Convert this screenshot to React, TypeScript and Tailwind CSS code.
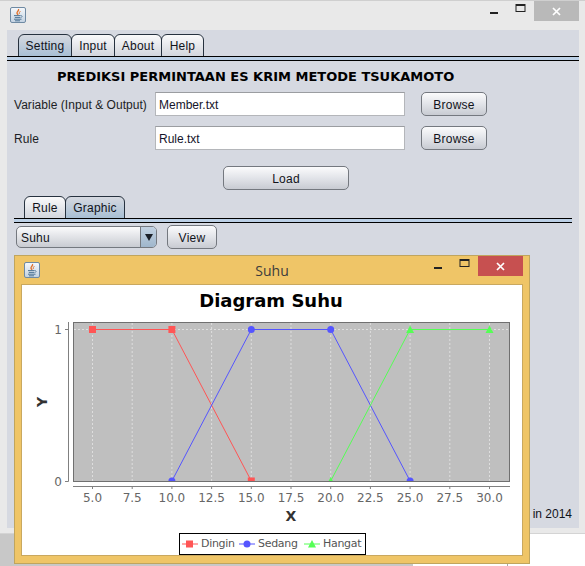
import type { ReactNode } from 'react';

function JavaIcon() {
  return (
    <div className="flex h-4 w-4 items-center justify-center rounded-[2px] border border-[#6f8aa3] bg-gradient-to-b from-[#f4f7fa] to-[#c4d3e2]">
      <svg width="14" height="14" viewBox="0 0 14 14" fill="none">
        <path d="M7.5 1C8.5 2.6 5.5 3.6 6 5.2C6.2 5.9 6.8 6.3 7 7" stroke="#e0702a" strokeWidth="1.3" />
        <path d="M9.4 3C9 4 7.8 4.4 8.3 6" stroke="#e0702a" strokeWidth="0.9" />
        <path d="M3 7.6H9.6M3.8 9.4H9M3 11.2H10.5M4 12.8H9" stroke="#4f7596" strokeWidth="1" />
        <path d="M9.8 7.6C11.6 7.4 11.6 9.4 9.4 9.6" stroke="#4f7596" strokeWidth="0.8" />
      </svg>
    </div>
  );
}

function WindowButtons({ closeClass, iconColor }: { closeClass: string; iconColor: string }) {
  return (
    <div className="flex items-start">
      <svg width="40" height="20" viewBox="0 0 40 20">
        <rect x="1" y="11" width="8" height="2" fill={iconColor} />
        <rect x="27" y="3.5" width="9" height="7" fill="none" stroke={iconColor} strokeWidth="1" />
        <rect x="27" y="3" width="9" height="2" fill={iconColor} />
      </svg>
      <div className={`ml-[5px] flex h-5 w-[45px] items-center justify-center ${closeClass}`}>
        <svg width="9" height="9" viewBox="0 0 9 9">
          <path d="M1 1L8 8M8 1L1 8" stroke="#fff" strokeWidth="1.7" />
        </svg>
      </div>
    </div>
  );
}

function Tab({ label, active, width }: { label: string; active?: boolean; width: string }) {
  return (
    <div
      className={`-mb-px flex h-[23px] items-center justify-center rounded-t-[6px] border border-[#27323f] text-[12px] tracking-[0.2px] text-[#11131a] ${width} ${
        active ? 'bg-gradient-to-b from-[#d6d9e0] to-[#a8bfd4]' : 'bg-gradient-to-b from-[#fafafb] to-[#d3d6dd]'
      }`}
    >
      {label}
    </div>
  );
}

function Separator() {
  return <div className="h-[5px] border-y border-black bg-[#bcd0e6]" />;
}

function Button({ children, className }: { children: ReactNode; className: string }) {
  return (
    <button className={`flex items-center justify-center rounded-[5px] border border-[#74787f] bg-gradient-to-b from-[#fbfbfc] via-[#e2e4e9] to-[#c8cbd2] pt-px text-[12px] tracking-[0.25px] text-[#11131a] ${className}`}>
      {children}
    </button>
  );
}

function TextRow({ label, value }: { label: string; value: string }) {
  return (
    <div className="flex h-6 items-center">
      <span className="w-[141px] pt-px text-[12px] tracking-[0.04px] text-[#1c1e25]">{label}</span>
      <div className="flex h-6 w-[250px] items-center border border-[#b4b6ba] border-t-[#9b9da1] bg-white pl-[3px] pt-px text-[12px] text-[#14142a]">
        {value}
      </div>
      <Button className="ml-4 h-6 w-[66px]">Browse</Button>
    </div>
  );
}

const xs = [0, 1, 2, 3, 4, 5, 6, 7, 8, 9, 10].map((i) => ({
  x: 92.5 + i * 39.7,
  label: (5 + i * 2.5).toFixed(1),
}));

const Y1 = 329.5;
const Y0 = 481;
const px = (v: number) => 92.5 + ((v - 5) / 25) * 397;
const sans = '"DejaVu Sans", sans-serif';

function Chart() {
  const red = [[5, Y1], [10, Y1], [15, Y0]];
  const blue = [[10, Y0], [15, Y1], [20, Y1], [25, Y0]];
  const green = [[20, Y0], [25, Y1], [30, Y1]];
  const pts = (list: number[][]) => list.map(([v, y]) => `${px(v)},${y}`).join(' ');

  return (
    <svg width="500" height="212" viewBox="22 316 500 212" className="block">
      <defs>
        <clipPath id="plot">
          <rect x="73" y="322" width="437" height="159" />
        </clipPath>
      </defs>
      <rect x="73.5" y="322.5" width="436" height="159" fill="#bfbfbf" stroke="#707070" />
      {xs.map((t) => (
        <line key={t.label} x1={t.x} x2={t.x} y1="323" y2="481" stroke="#dedede" strokeWidth="1" strokeDasharray="2 2" />
      ))}
      <line x1="74" x2="509" y1={Y1} y2={Y1} stroke="#dedede" strokeDasharray="2 2" />
      <g clipPath="url(#plot)">
        <polyline points={pts(red)} fill="none" stroke="#ff5555" />
        {red.map(([v, y]) => (
          <rect key={v} x={px(v) - 3.5} y={y - 3.5} width="7" height="7" fill="#ff5555" />
        ))}
        <polyline points={pts(blue)} fill="none" stroke="#5555ff" />
        {blue.map(([v, y]) => (
          <circle key={v} cx={px(v)} cy={y} r="3.5" fill="#5555ff" />
        ))}
        <polyline points={pts(green)} fill="none" stroke="#55ff55" />
        {green.map(([v, y]) => (
          <path key={v} d={`M${px(v)} ${y - 4}L${px(v) + 4} ${y + 3.5}H${px(v) - 4}Z`} fill="#55ff55" />
        ))}
      </g>
      <path d="M68.5 322V481.5M65 329.5H68.5M65 481.5H68.5M73 486.5H510" stroke="#808080" fill="none" />
      {xs.map((t) => (
        <line key={t.label} x1={t.x} x2={t.x} y1="486" y2="489" stroke="#808080" />
      ))}
      <g fontFamily={sans} fontSize="12" fill="#666">
        <text x="62" y="334" textAnchor="end">1</text>
        <text x="62" y="486" textAnchor="end">0</text>
        {xs.map((t) => (
          <text key={t.label} x={t.x} y="502" textAnchor="middle">{t.label}</text>
        ))}
      </g>
      <text x="291" y="521" textAnchor="middle" fontFamily={sans} fontSize="14" fontWeight="bold" fill="#333">X</text>
      <text x="0" y="0" transform="translate(47 402) rotate(-90)" textAnchor="middle" fontFamily={sans} fontSize="14" fontWeight="bold" fill="#333">Y</text>
    </svg>
  );
}

function LegendItem({ label, width, children }: { label: string; width: string; children: ReactNode }) {
  return (
    <div className={`flex items-center gap-[3px] ${width}`}>
      <svg width="16" height="10" viewBox="0 0 16 10" className="shrink-0">{children}</svg>
      <span>{label}</span>
    </div>
  );
}

function SuhuWindow() {
  return (
    <div className="absolute left-[14px] top-[255px] flex h-[309px] w-[516px] flex-col border border-[#c0a55e] bg-[#efc567] px-[6px] pb-[7px]">
      <div className="relative flex h-[28px] shrink-0 items-start justify-between pl-[3px] pt-[6px]">
        <JavaIcon />
        <span className="absolute left-0 right-0 top-[7px] text-center text-[14px] leading-[16px] text-[#3c3c3c] [font-family:'Open_Sans',sans-serif]">
          Suhu
        </span>
        <div className="-mt-[6px] mr-0 flex">
          <WindowButtons closeClass="bg-[#c75050]" iconColor="#222" />
        </div>
      </div>
      <div className="flex-1 border border-[#c9a85f] bg-white">
        <div className="flex h-[31px] items-center justify-center pr-[2px] text-[18px] font-bold text-black [font-family:'DejaVu_Sans',sans-serif]">
          Diagram Suhu
        </div>
        <Chart />
        <div className="ml-[157px] mt-[5px] flex h-[22px] w-[187px] items-center border border-black pl-[2px] text-[11px] tracking-[-0.3px] text-[#555] [font-family:'DejaVu_Sans',sans-serif]">
          <LegendItem label="Dingin" width="w-[57px]">
            <path d="M0 5H16" stroke="#ff5555" />
            <rect x="4" y="1.5" width="7" height="7" fill="#ff5555" />
          </LegendItem>
          <LegendItem label="Sedang" width="w-[65px]">
            <path d="M0 5H16" stroke="#5555ff" />
            <circle cx="8" cy="5" r="3.5" fill="#5555ff" />
          </LegendItem>
          <LegendItem label="Hangat" width="w-[60px]">
            <path d="M0 5H16" stroke="#55ff55" />
            <path d="M8 1L12 8.5H4Z" fill="#55ff55" />
          </LegendItem>
        </div>
      </div>
    </div>
  );
}

export default function App() {
  return (
    <div className="relative h-[566px] w-[585px] overflow-hidden bg-white [font-family:'Liberation_Sans',Arial,sans-serif]">
      <div className="flex h-[534px] flex-col border-t border-b border-t-[#cfcfcf] border-b-[#d4d4d4] bg-[#e9e9e9]">
        <div className="flex h-[29px] shrink-0 items-start justify-between pl-[10px] pr-[6px]">
          <div className="pt-[6px]">
            <JavaIcon />
          </div>
          <WindowButtons closeClass="bg-[#b9b9b9]" iconColor="#222" />
        </div>
        <div className="ml-[7px] mr-[6px] flex flex-1 flex-col bg-[#d6d9e1]">
          <div className="flex pl-[11px] pt-[4px]">
            <Tab label="Setting" active width="w-[54px]" />
            <Tab label="Input" width="w-[44px] -ml-px" />
            <Tab label="About" width="w-[48px] -ml-px" />
            <Tab label="Help" width="w-[43px] -ml-px" />
          </div>
          <Separator />
          <div className="mt-2 h-4 pl-[50px] text-[13px] font-bold leading-4 text-black [font-family:'DejaVu_Sans',sans-serif]">
            PREDIKSI PERMINTAAN ES KRIM METODE TSUKAMOTO
          </div>
          <div className="mt-[7px] pl-[7px]">
            <TextRow label="Variable (Input & Output)" value="Member.txt" />
          </div>
          <div className="mt-[10px] pl-[7px]">
            <TextRow label="Rule" value="Rule.txt" />
          </div>
          <Button className="ml-[216px] mt-4 h-6 w-[126px]">Load</Button>
          <div className="mt-[6px] flex pl-[17px]">
            <Tab label="Rule" width="w-[42px]" />
            <Tab label="Graphic" active width="w-[60px] -ml-px" />
          </div>
          <div className="mx-[7px]">
            <Separator />
          </div>
          <div className="mt-[2px] flex h-6 items-center pl-[9px]">
            <div className="flex h-[22px] w-[141px] items-center justify-between rounded-[5px] border border-[#74787f] bg-gradient-to-b from-[#fbfbfc] to-[#c8cbd2] pl-[4px] text-[12px] tracking-[0.2px] text-[#11131a]">
              <span className="pt-px">Suhu</span>
              <div className="flex h-full w-4 items-center justify-center rounded-r-[4px] border-l border-[#74787f] bg-gradient-to-b from-[#c3d2e2] to-[#9fb6cc]">
                <svg width="8" height="7" viewBox="0 0 8 7">
                  <path d="M0 0H8L4 7Z" fill="#1a1f28" />
                </svg>
              </div>
            </div>
            <Button className="ml-[10px] h-6 w-[50px]">View</Button>
          </div>
          <div className="mb-[7px] mt-auto pr-[7px] text-right text-[12px] leading-[14px] text-[#11131a]">in 2014</div>
        </div>
        <div className="h-[5px] shrink-0" />
      </div>
      <div className="flex h-8">
        <div className="h-full w-[413px] bg-[#c8c8c8]" />
        <div className="ml-[94px] h-full w-px bg-[#a8a8a8]" />
      </div>
      <SuhuWindow />
    </div>
  );
}
